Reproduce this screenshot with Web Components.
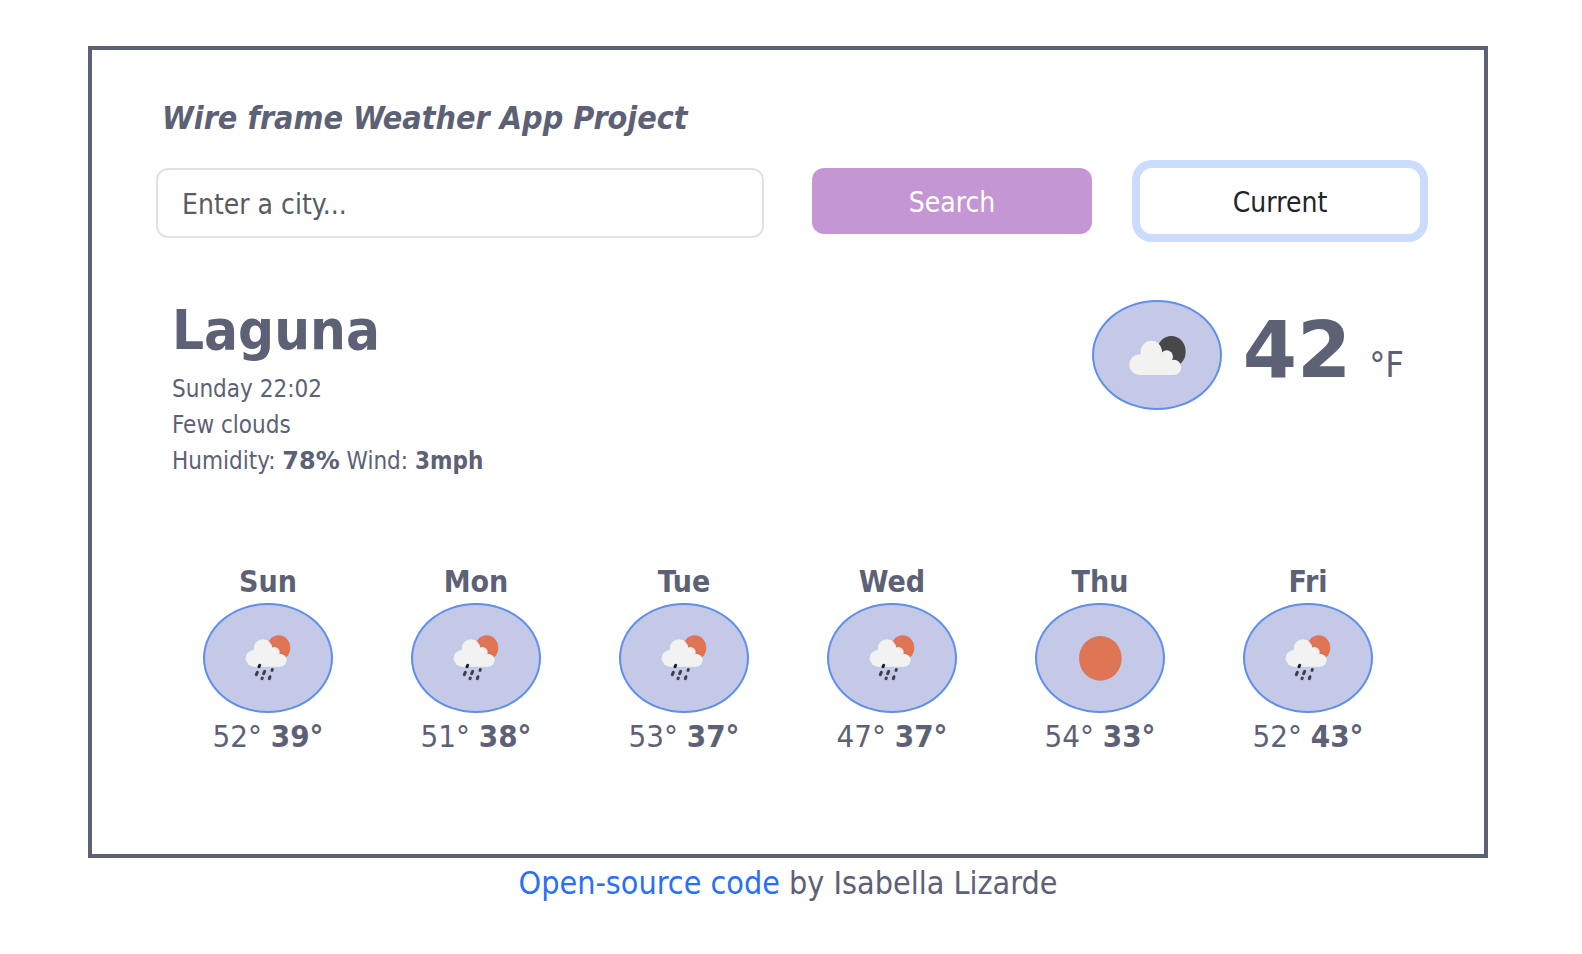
<!DOCTYPE html>
<html lang="en">
<head>
<meta charset="utf-8">
<meta name="viewport" content="width=device-width, initial-scale=1">
<title>Weather App</title>
<style>
  body {
    margin: 0;
    background: #fff;
    color: #5c6175;
    font-family: "DejaVu Sans Condensed", Tahoma, "DejaVu Sans", sans-serif;
    --wide-digits: "DejaVu Sans", Verdana, sans-serif;
  }
</style>
</head>
<body>
<weather-app></weather-app>

<template id="tpl-app">
  <style>
    :host { display: block; padding: 46px 94px 0 88px; }
    main { border: 4px solid #5c6175; padding: 48px 64px 95px; }
    h1 { margin: 0 0 30px 6px; font-size: 32px; line-height: 40px; font-style: italic; }
    current-weather { margin-top: 62px; }
    .days { display: grid; grid-template-columns: repeat(6, 1fr); margin: 84px 8px 0; }
    footer { text-align: center; font-size: 32px; line-height: 50px; }
    a { color: #2a6ff8; text-decoration: none; }
  </style>
  <main>
    <h1>Wire frame Weather App Project</h1>
    <city-search></city-search>
    <current-weather>
      <span slot="city">Laguna</span>
      <span slot="time">Sunday 22:02</span>
      <span slot="sky">Few clouds</span>
      <strong slot="humidity">78%</strong>
      <strong slot="wind">3mph</strong>
      <weather-icon slot="icon" kind="few-clouds-night"></weather-icon>
      <span slot="temp">42</span>
    </current-weather>
    <section class="days">
      <forecast-day kind="rain" high="52" low="39">Sun</forecast-day>
      <forecast-day kind="rain" high="51" low="38">Mon</forecast-day>
      <forecast-day kind="rain" high="53" low="37">Tue</forecast-day>
      <forecast-day kind="rain" high="47" low="37">Wed</forecast-day>
      <forecast-day kind="clear" high="54" low="33">Thu</forecast-day>
      <forecast-day kind="rain" high="52" low="43">Fri</forecast-day>
    </section>
  </main>
  <footer><a href="#source">Open-source code</a> by Isabella Lizarde</footer>
</template>

<template id="tpl-search">
  <style>
    :host { display: block; }
    form { display: grid; grid-template-columns: 608fr 280fr 280fr; column-gap: 48px; align-items: start; }
    input, button { box-sizing: border-box; width: 100%; min-width: 0; margin: 0; border-radius: 12px; font: inherit; font-size: 28px; }
    input { height: 70px; padding: 2px 24px 0; border: 2px solid #dee2e6; background: #fff; color: #212529; }
    input::placeholder { color: #595c5f; opacity: 1; }
    button { height: 66px; padding: 2px 24px 0; border: 0; }
    .search { background: #c596d4; color: #fff; }
    .current { background: #fff; color: #212529; box-shadow: 0 0 0 8px #cbdcfd; }
  </style>
  <form onsubmit="return false">
    <input type="text" placeholder="Enter a city..." aria-label="City" autocomplete="off">
    <button class="search" type="submit">Search</button>
    <button class="current" type="button">Current</button>
  </form>
</template>

<template id="tpl-current">
  <style>
    :host { display: flex; justify-content: space-between; align-items: flex-start; padding: 0 16px; }
    h2 { margin: 0 0 11px; font-size: 56px; line-height: 60px; }
    ul { margin: 0; padding: 0; list-style: none; font-size: 24px; line-height: 36px; }
    ::slotted([slot="humidity"]) { font-family: var(--wide-digits); }
    .reading { display: flex; align-items: flex-start; }
    .temp { display: flex; align-items: baseline; gap: 18px; margin-left: 21px; line-height: 100px; }
    .temp strong { font-family: var(--wide-digits); font-size: 78px; }
    .temp span { font-size: 36px; }
  </style>
  <div>
    <h2><slot name="city"></slot></h2>
    <ul>
      <li><slot name="time"></slot></li>
      <li><slot name="sky"></slot></li>
      <li>Humidity: <slot name="humidity"></slot> Wind: <slot name="wind"></slot></li>
    </ul>
  </div>
  <div class="reading">
    <slot name="icon"></slot>
    <div class="temp"><strong><slot name="temp"></slot></strong><span>°F</span></div>
  </div>
</template>

<template id="tpl-day">
  <style>
    :host { display: flex; flex-direction: column; align-items: center; }
    h3 { margin: 0 0 2px; font-size: 30px; line-height: 38px; }
    p { margin: 0; font-size: 31px; line-height: 46px; }
  </style>
  <h3><slot></slot></h3>
  <weather-icon></weather-icon>
  <p><span class="high"></span> <strong class="low"></strong></p>
</template>

<template id="tpl-icon">
  <style>
    :host { display: block; box-sizing: border-box; width: 130px; height: 110px; border: 2px solid #5f8fe8; border-radius: 50%; background: #c3c9e7; }
    svg { display: none; width: 100%; height: 100%; }
    :host([kind="few-clouds-night"]) .night,
    :host([kind="rain"]) .rain,
    :host([kind="clear"]) .clear { display: block; }
  </style>
  <svg class="night" viewBox="6 6 378 318" aria-hidden="true">
    <g transform="translate(91 84)">
      <ellipse cx="147" cy="71" rx="43" ry="47" fill="#484848"/>
      <g fill="#f2f2f1">
        <circle cx="52" cy="110" r="31"/>
        <ellipse cx="87" cy="72" rx="32" ry="34"/>
        <circle cx="133" cy="86" r="19"/>
        <circle cx="154" cy="118" r="23"/>
        <path d="M52 141V85L90 70L116 82L133 90L154 100V141Z"/>
      </g>
    </g>
  </svg>
  <svg class="rain" viewBox="6 6 378 318" aria-hidden="true">
    <g transform="translate(111 81)">
      <ellipse cx="116" cy="53" rx="35" ry="37" fill="#de7656"/>
      <g fill="#f2f2f2">
        <circle cx="42" cy="85" r="25"/>
        <circle cx="69" cy="56" r="28"/>
        <circle cx="103" cy="67" r="16"/>
        <circle cx="121" cy="91" r="19"/>
        <path d="M42 110V65L70 55L92 68L103 72L121 80V110Z"/>
      </g>
      <g stroke="#3f4046" stroke-width="9" stroke-linecap="round">
        <path d="M59 106L57 110" stroke="#1d1d1d"/>
        <path d="M52 127L49 134M74 124L71 131M97 119L96 121M67 144L66 146M90 140L88 146"/>
      </g>
    </g>
  </svg>
  <svg class="clear" viewBox="6 6 378 318" aria-hidden="true">
    <ellipse cx="196" cy="166" rx="64" ry="67" fill="#de7656"/>
  </svg>
</template>

<script>
  class TemplateElement extends HTMLElement {
    constructor() {
      super();
      const tpl = document.getElementById(this.constructor.template);
      this.attachShadow({ mode: 'open' }).append(document.importNode(tpl.content, true));
    }
  }

  class WeatherIcon extends TemplateElement {
    static template = 'tpl-icon';
  }

  class ForecastDay extends TemplateElement {
    static template = 'tpl-day';
    connectedCallback() {
      const find = (selector) => this.shadowRoot.querySelector(selector);
      find('weather-icon').setAttribute('kind', this.getAttribute('kind'));
      find('.high').textContent = this.getAttribute('high') + '°';
      find('.low').textContent = this.getAttribute('low') + '°';
    }
  }

  class CurrentWeather extends TemplateElement {
    static template = 'tpl-current';
  }

  class CitySearch extends TemplateElement {
    static template = 'tpl-search';
  }

  class WeatherApp extends TemplateElement {
    static template = 'tpl-app';
  }

  customElements.define('weather-icon', WeatherIcon);
  customElements.define('forecast-day', ForecastDay);
  customElements.define('current-weather', CurrentWeather);
  customElements.define('city-search', CitySearch);
  customElements.define('weather-app', WeatherApp);
</script>
</body>
</html>
